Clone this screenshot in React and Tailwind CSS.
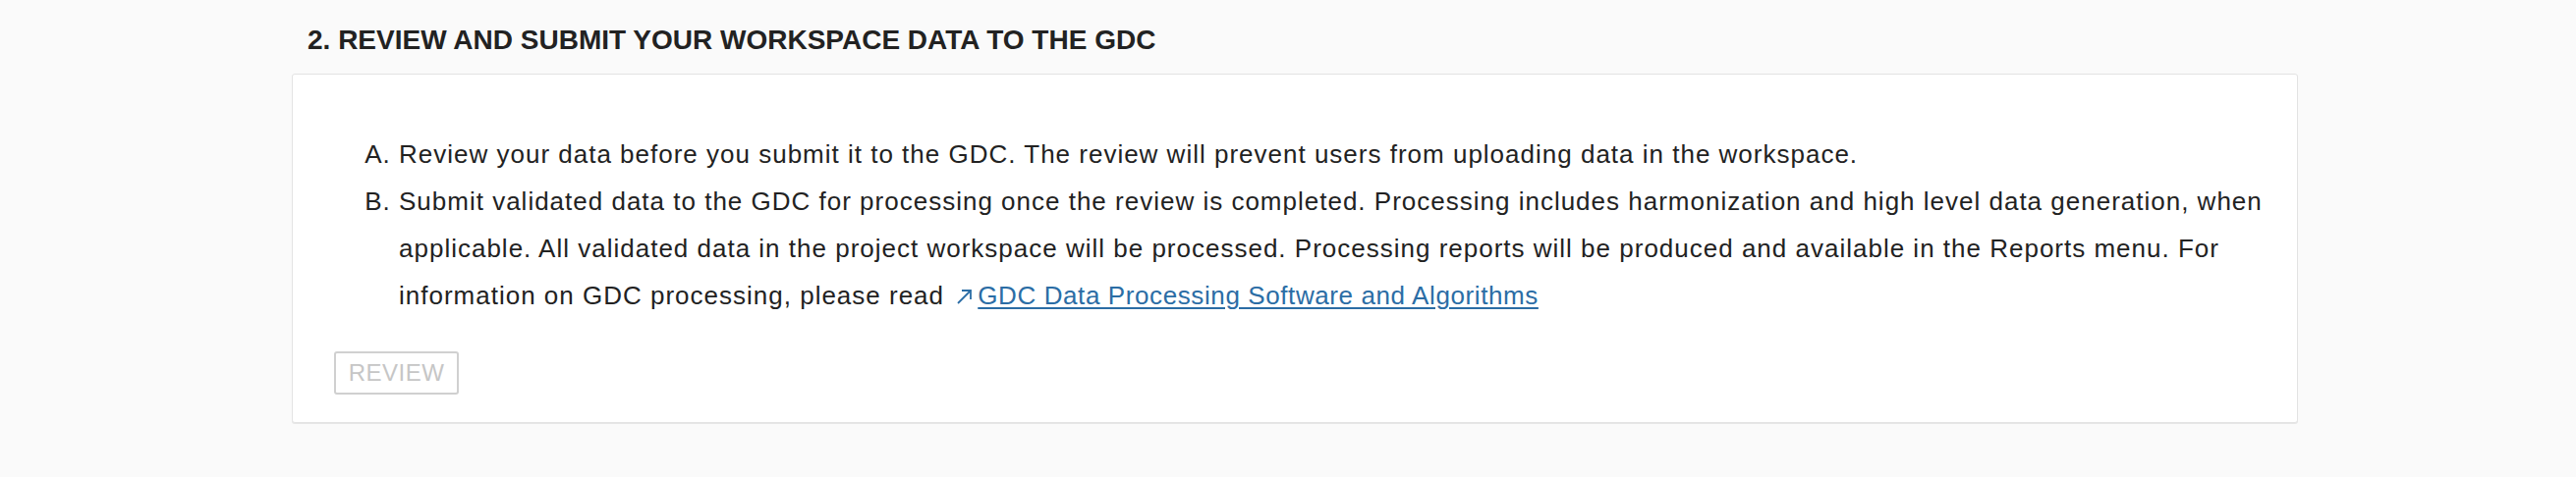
export default function App() {
  return (
    <div className="min-h-[486px] w-full bg-[#fafafa] font-['Liberation_Sans',Arial,sans-serif] text-[#222]">
      <div className="ml-[297px] w-[2042px] pt-[25px]">
        <h2 className="pl-[16px] text-[28px] leading-[32px] font-bold text-[#222]">
          2. REVIEW AND SUBMIT YOUR WORKSPACE DATA TO THE GDC
        </h2>
        <div className="mt-[18px] rounded-[3px] border border-[#e3e3e3] bg-white pt-[57px] pb-[28px] pl-[42px] shadow-[0_1px_0_#e6e6e6]">
          <ol className="list-[upper-alpha] pl-[66px] pr-[16px] text-[26px] leading-[48px] tracking-[1px]">
            <li>
              Review your data before you submit it to the GDC. The review will prevent users from uploading data in the workspace.
            </li>
            <li>
              Submit validated data to the GDC for processing once the review is completed. Processing includes harmonization and high level data generation, when applicable. All validated data in the project workspace will be processed. Processing reports will be produced and available in the Reports menu. For information on GDC processing, please read{" "}
              <a href="#" className="text-[#2b6da5]">
                <svg className="inline-block align-[-1px] ml-[4px] mr-[4px]" width="18" height="18" viewBox="0 0 18 18" fill="none" stroke="#2b6da5" strokeWidth="1.8">
                  <path d="M2 16 L15 3" />
                  <path d="M6 3 L15 3 L15 12" />
                </svg>
                <span className="underline underline-offset-[3px] decoration-[2px] tracking-[0.6px]">GDC Data Processing Software and Algorithms</span>
              </a>
            </li>
          </ol>
          <button className="mt-[33px] h-[44px] w-[127px] rounded-[3px] border-2 border-[#d0d0d0] bg-white text-[24px] leading-none tracking-[0.5px] text-[#c6c6c6]">
            REVIEW
          </button>
        </div>
      </div>
    </div>
  );
}
